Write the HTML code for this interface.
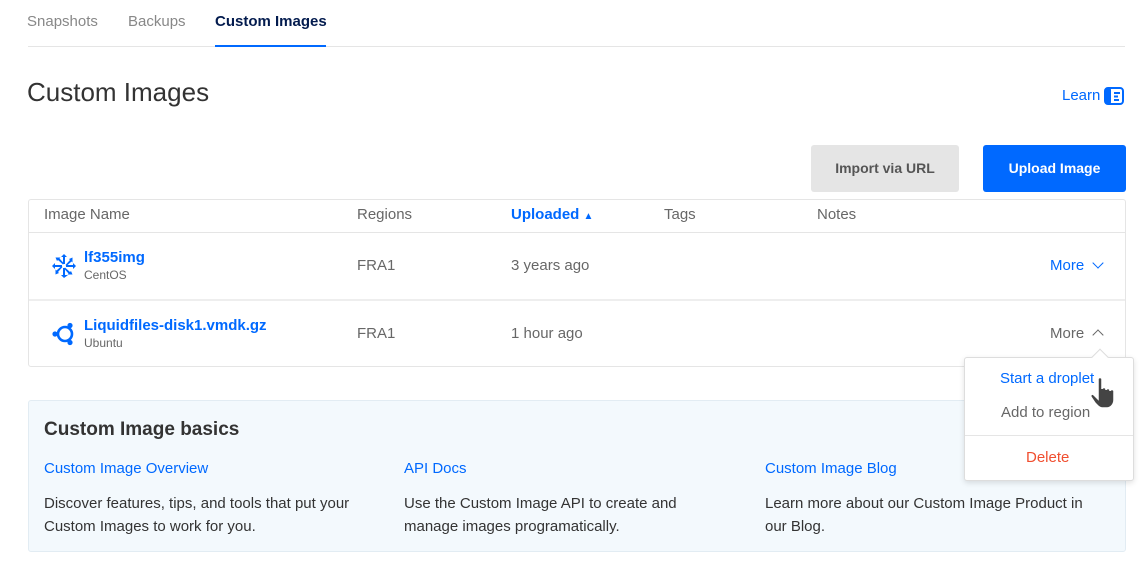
<!DOCTYPE html>
<html><head><style>
*{box-sizing:border-box;margin:0;padding:0}
body{width:1143px;height:574px;background:#fff;font-family:"Liberation Sans",sans-serif;position:relative;overflow:hidden;color:#333}
.a{position:absolute;white-space:nowrap}
.blue{color:#0069ff}
.gray{color:#676767}
</style></head><body>
<div class="a gray" style="left:27px;top:13px;font-size:15px;color:#888">Snapshots</div>
<div class="a" style="left:128px;top:13px;font-size:15px;color:#888">Backups</div>
<div class="a" style="left:215px;top:13px;font-size:15px;color:#031b4e;font-weight:bold">Custom Images</div>
<div class="a" style="left:28px;top:46px;width:1097px;height:1px;background:#e5e5e5"></div>
<div class="a" style="left:215px;top:45px;width:111px;height:2px;background:#0069ff"></div>

<div class="a" style="left:27px;top:77px;font-size:26px;color:#333">Custom Images</div>
<div class="a blue" style="left:1062px;top:87px;font-size:15px">Learn</div>
<svg class="a" style="left:1104px;top:87px" width="20" height="18" viewBox="0 0 20 18"><rect x="1" y="1" width="18" height="16" rx="3" fill="none" stroke="#0069ff" stroke-width="2"/><rect x="1" y="1" width="6" height="16" rx="2" fill="#0069ff"/><rect x="10" y="5" width="6" height="2" fill="#0069ff"/><rect x="10" y="8.5" width="4" height="2" fill="#0069ff"/><rect x="10" y="12" width="5" height="2" fill="#0069ff"/></svg>

<div class="a" style="left:811px;top:145px;width:148px;height:47px;background:#e5e5e5;border-radius:3px;font-size:14px;font-weight:bold;color:#555;text-align:center;line-height:47px">Import via URL</div>
<div class="a" style="left:983px;top:145px;width:143px;height:47px;background:#0069ff;border-radius:3px;font-size:14px;font-weight:bold;color:#fff;text-align:center;line-height:47px">Upload Image</div>

<div class="a" style="left:28px;top:199px;width:1098px;height:168px;border:1px solid #e5e5e5;border-radius:3px"></div>
<div class="a" style="left:29px;top:232px;width:1096px;height:1px;background:#e5e5e5"></div>
<div class="a" style="left:29px;top:299px;width:1096px;height:2px;background:#eee"></div>
<div class="a gray" style="left:44px;top:206px;font-size:15px">Image Name</div>
<div class="a gray" style="left:357px;top:206px;font-size:15px">Regions</div>
<div class="a blue" style="left:511px;top:206px;font-size:15px;font-weight:bold">Uploaded <span style="font-size:10px">▲</span></div>
<div class="a gray" style="left:664px;top:206px;font-size:15px">Tags</div>
<div class="a gray" style="left:817px;top:206px;font-size:15px">Notes</div>

<svg class="a" style="left:52px;top:254px" width="24" height="24" viewBox="0 0 24 24" fill="#0069ff"><path d="M12 0l3 3h-2v7h-2V3H9zM12 24l-3-3h2v-7h2v7h3zM0 12l3-3v2h7v2H3v2zM24 12l-3 3v-2h-7v-2h7V9z"/><path d="M3.5 3.5h5l-1 1 4.5 5-1 1-5-4.5-1 1zM20.5 20.5h-5l1-1-4.5-5 1-1 5 4.5 1-1zM20.5 3.5v5l-1-1-5 4.5-1-1 4.5-5-1-1zM3.5 20.5v-5l1 1 5-4.5 1 1-4.5 5 1 1z"/></svg>
<div class="a blue" style="left:84px;top:249px;font-size:15px;font-weight:bold">lf355img</div>
<div class="a gray" style="left:84px;top:268px;font-size:12px">CentOS</div>
<div class="a gray" style="left:357px;top:257px;font-size:15px">FRA1</div>
<div class="a gray" style="left:511px;top:257px;font-size:15px">3 years ago</div>
<div class="a blue" style="left:1050px;top:257px;font-size:15px">More <span style="display:inline-block;width:8px;height:8px;border-right:1.6px solid #0069ff;border-bottom:1.6px solid #0069ff;transform:rotate(45deg);margin:0 0 3px 6px"></span></div>

<svg class="a" style="left:52px;top:322px" width="24" height="24" viewBox="0 0 24 24"><circle cx="13" cy="12" r="7" fill="none" stroke="#0069ff" stroke-width="2.6"/><circle cx="3" cy="12" r="2.6" fill="#0069ff"/><circle cx="18" cy="3.5" r="2.6" fill="#0069ff"/><circle cx="18" cy="20.5" r="2.6" fill="#0069ff"/></svg>
<div class="a blue" style="left:84px;top:317px;font-size:15px;font-weight:bold">Liquidfiles-disk1.vmdk.gz</div>
<div class="a gray" style="left:84px;top:336px;font-size:12px">Ubuntu</div>
<div class="a gray" style="left:357px;top:325px;font-size:15px">FRA1</div>
<div class="a gray" style="left:511px;top:325px;font-size:15px">1 hour ago</div>
<div class="a gray" style="left:1050px;top:325px;font-size:15px">More <span style="display:inline-block;width:8px;height:8px;border-left:1.6px solid #676767;border-top:1.6px solid #676767;transform:rotate(45deg);margin:0 0 -1px 6px"></span></div>

<div class="a" style="left:28px;top:400px;width:1098px;height:152px;background:#f3f9fd;border:1px solid #e2ecf3;border-radius:3px"></div>
<div class="a" style="left:44px;top:419px;font-size:19px;font-weight:bold;color:#333">Custom Image basics</div>
<div class="a blue" style="left:44px;top:460px;font-size:15px">Custom Image Overview</div>
<div class="a blue" style="left:404px;top:460px;font-size:15px">API Docs</div>
<div class="a blue" style="left:765px;top:460px;font-size:15px">Custom Image Blog</div>
<div class="a" style="left:44px;top:492px;font-size:15px;line-height:23px;color:#333">Discover features, tips, and tools that put your<br>Custom Images to work for you.</div>
<div class="a" style="left:404px;top:492px;font-size:15px;line-height:23px;color:#333">Use the Custom Image API to create and<br>manage images programatically.</div>
<div class="a" style="left:765px;top:492px;font-size:15px;line-height:23px;color:#333">Learn more about our Custom Image Product in<br>our Blog.</div>

<div class="a" style="left:964px;top:357px;width:170px;height:124px;background:#fff;border:1px solid #ddd;border-radius:3px;box-shadow:0 2px 6px rgba(0,0,0,.12)"></div>
<div class="a" style="left:1094px;top:351px;width:12px;height:12px;background:#fff;border-left:1px solid #ddd;border-top:1px solid #ddd;transform:rotate(45deg)"></div>
<div class="a blue" style="left:1000px;top:370px;font-size:15px">Start a droplet</div>
<div class="a gray" style="left:1001px;top:404px;font-size:15px">Add to region</div>
<div class="a" style="left:965px;top:435px;width:168px;height:1px;background:#e5e5e5"></div>
<div class="a" style="left:1026px;top:449px;font-size:15px;color:#f04e2f">Delete</div>
<svg class="a" style="left:1090px;top:376px" width="30" height="34" viewBox="0 0 30 34"><path d="M8 3c0-2 4-2 4 0v10c0-2 4-2 4 0v1c0-2 4-2 4 0v1c0-2 4-2 4 0v9c0 4-3 8-7 8h-5c-3 0-5-3-7-5l-4-6c-1-2 1-4 3-2l4 4z" fill="#444" stroke="#fff" stroke-width="1.5"/></svg>
</body></html>
